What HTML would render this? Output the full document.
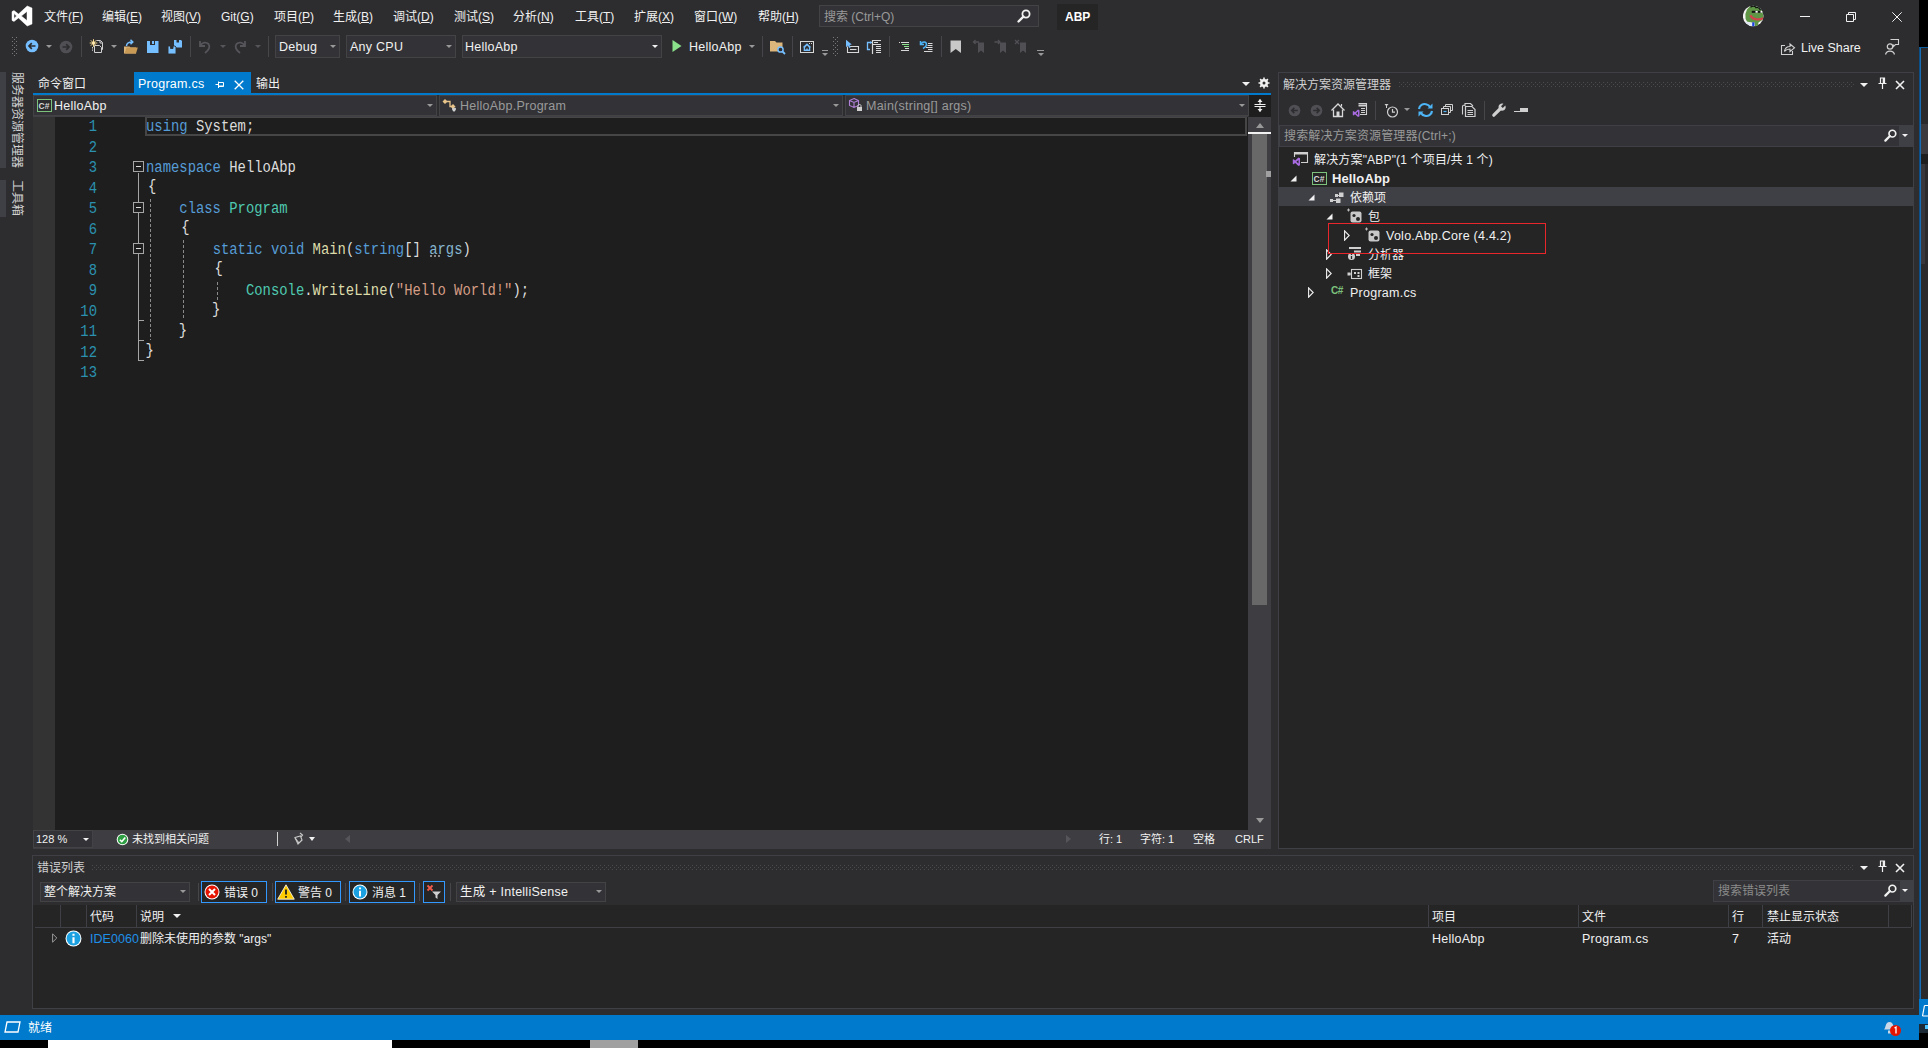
<!DOCTYPE html>
<html lang="zh-CN">
<head>
<meta charset="utf-8">
<title>ABP - Microsoft Visual Studio</title>
<style>
*{box-sizing:border-box;margin:0;padding:0}
html,body{width:1928px;height:1048px;overflow:hidden;background:#000}
body{font-family:"Liberation Sans","Noto Sans CJK SC",sans-serif;font-size:12px;color:#f1f1f1;position:relative}
.a{position:absolute}
.t{position:absolute;white-space:nowrap;line-height:16px;height:16px}
#win{position:absolute;left:0;top:0;width:1919px;height:1040px;background:#2d2d30;overflow:hidden}
u{text-decoration:underline;text-underline-offset:1px}
.mi{position:absolute;top:9px;white-space:nowrap;line-height:16px;font-size:12px;color:#f1f1f1}
.combo{position:absolute;background:#333337;border:1px solid #434346}
.arr{position:absolute;width:0;height:0;border-left:3px solid transparent;border-right:3px solid transparent;border-top:3px solid #999}
.arrw{position:absolute;width:0;height:0;border-left:4px solid transparent;border-right:4px solid transparent;border-top:4px solid #f1f1f1}
.sep{position:absolute;width:1px;background:#46464a}
.code{font-family:"Liberation Mono","Noto Sans CJK SC",monospace;font-size:13.89px;white-space:pre;position:absolute;height:20.5px;line-height:20.5px;color:#dcdcdc;transform-origin:0 50%;transform:scaleY(1.18)}
.ln{font-family:"Liberation Mono",monospace;font-size:13.89px;position:absolute;left:60px;width:37px;text-align:right;height:20.5px;line-height:20.5px;color:#2b91af;transform-origin:0 50%;transform:scaleY(1.18)}
.k{color:#569cd6}.c{color:#4ec9b0}.m{color:#dcdcaa}.s{color:#d69d85}.p{color:#9cdcfe}
.grip{position:absolute;height:5px;background-image:radial-gradient(circle,#46464a 0.6px,transparent 0.8px);background-size:4px 4px;background-position:0 0}
.tree{position:absolute;left:1279px;width:632px;height:19px}
</style>
</head>
<body>
<div id="win">
<svg width="0" height="0" style="position:absolute"><defs>
<pattern id="gp" width="4" height="4" patternUnits="userSpaceOnUse"><rect x="0" y="0" width="1" height="1" fill="#4a4a4f"/><rect x="2" y="2" width="1" height="1" fill="#4a4a4f"/></pattern>
<pattern id="gv" width="4" height="4" patternUnits="userSpaceOnUse"><rect x="0" y="0" width="1" height="1" fill="#77777c"/><rect x="2" y="2" width="1" height="1" fill="#77777c"/></pattern>
</defs></svg>
<!-- MENUBAR -->
<div id="menubar">
<svg class="a" style="left:11px;top:5px" width="22" height="22" viewBox="0 0 22 22"><path fill="#ffffff" stroke="#ffffff" stroke-width="0.5" stroke-linejoin="round" d="M16.2 1 L21 3 V19 L16.2 21 L7.5 12.9 L3 16.4 L1 15.4 V6.6 L3 5.6 L7.5 9.1 Z M16 6.4 L10.3 11 L16 15.6 Z M3 8.6 V13.4 L5.5 11 Z"/></svg>
<div class="mi" style="left:44px">文件(<u>F</u>)</div>
<div class="mi" style="left:102px">编辑(<u>E</u>)</div>
<div class="mi" style="left:161px">视图(<u>V</u>)</div>
<div class="mi" style="left:221px">Git(<u>G</u>)</div>
<div class="mi" style="left:274px">项目(<u>P</u>)</div>
<div class="mi" style="left:333px">生成(<u>B</u>)</div>
<div class="mi" style="left:393px">调试(<u>D</u>)</div>
<div class="mi" style="left:454px">测试(<u>S</u>)</div>
<div class="mi" style="left:513px">分析(<u>N</u>)</div>
<div class="mi" style="left:575px">工具(<u>T</u>)</div>
<div class="mi" style="left:634px">扩展(<u>X</u>)</div>
<div class="mi" style="left:694px">窗口(<u>W</u>)</div>
<div class="mi" style="left:758px">帮助(<u>H</u>)</div>
<div class="a" style="left:819px;top:5px;width:220px;height:22px;background:#333337;border:1px solid #434346"></div>
<div class="t" style="left:824px;top:9px;color:#999">搜索 (Ctrl+Q)</div>
<svg class="a" style="left:1016px;top:8px" width="16" height="16" viewBox="0 0 16 16"><circle cx="10" cy="6" r="3.6" fill="none" stroke="#f1f1f1" stroke-width="1.8"/><path d="M7.4 8.6 L2.5 13.5" stroke="#f1f1f1" stroke-width="2.4" stroke-linecap="round"/></svg>
<div class="a" style="left:1057px;top:4px;width:41px;height:26px;background:#252526"></div>
<div class="t" style="left:1065px;top:9px;font-weight:bold;color:#fff">ABP</div>
<!-- avatar -->
<svg class="a" style="left:1743px;top:5px" width="21" height="22" viewBox="0 0 21 22"><defs><clipPath id="avc"><circle cx="10.200" cy="11" r="10.300"/></clipPath></defs><circle cx="10.200" cy="11" r="10.300" fill="#f2f2f2"/><g clip-path="url(#avc)"><path d="M2.600 14 L2.400 9 L4 4.500 L7 1.300 L12 0.500 L16.500 2.500 L19 5.500 L20 9 L21 13 L18.500 15.500 L15.500 17.500 L14.500 21.500 L12 21.500 L11.500 17.500 L8 17.500 L4 16.500Z" fill="#5e9645"/><path d="M7.500 2.200 C9 0.500 12 0.500 13 2.500 C14.500 2 16.500 3 17.500 5" fill="none" stroke="#111" stroke-width="1.500"/><rect x="8.800" y="5.800" width="11" height="2" fill="#111"/><rect x="12.500" y="5.900" width="2.200" height="1.800" fill="#fff"/><rect x="17.500" y="5.900" width="2" height="1.800" fill="#fff"/><path d="M7.300 10.200 C9 14 15 16 21 13" fill="none" stroke="#d0454c" stroke-width="2.200"/><path d="M2.500 17 L8.500 17.500 L9 22 L5 21Z" fill="#dfe8f2"/><rect x="9.200" y="17.300" width="2.200" height="4.500" fill="#1b3fe0"/></g></svg>
<!-- window buttons -->
<div class="a" style="left:1800px;top:16px;width:10px;height:1px;background:#f1f1f1"></div>
<svg class="a" style="left:1846px;top:12px" width="10" height="10" viewBox="0 0 10 10"><path d="M0.500 2.500 H7.500 V9.500 H0.500 Z M2.500 2.500 V0.500 H9.500 V7.500 H7.500" fill="none" stroke="#f1f1f1" stroke-width="1"/></svg>
<svg class="a" style="left:1892px;top:12px" width="10" height="10" viewBox="0 0 10 10"><path d="M0.300 0.300 L9.700 9.700 M9.700 0.300 L0.300 9.700" stroke="#f1f1f1" stroke-width="1"/></svg>
</div><!--/menubar-->
<!-- TOOLBAR -->
<div id="toolbar">
<svg class="a" style="left:12px;top:37px" width="5" height="19"><rect width="5" height="19" fill="url(#gv)"/></svg>
<!-- back -->
<svg class="a" style="left:25px;top:39px" width="14" height="14" viewBox="0 0 14 14"><circle cx="7" cy="7" r="6.3" fill="#75beff"/><path d="M10.5 7 H4.2 M6.8 4.2 L4 7 L6.8 9.8" stroke="#2d2d30" stroke-width="1.7" fill="none"/></svg>
<div class="arr" style="left:46px;top:45px"></div>
<svg class="a" style="left:59px;top:40px" width="14" height="14" viewBox="0 0 14 14"><circle cx="7" cy="7" r="6.3" fill="#505054"/><path d="M3.5 7 H9.8 M7.2 4.2 L10 7 L7.2 9.8" stroke="#2d2d30" stroke-width="1.7" fill="none"/></svg>
<div class="sep" style="left:81px;top:36px;height:21px"></div>
<!-- new item -->
<svg class="a" style="left:89px;top:38px" width="16" height="16" viewBox="0 0 16 16"><path d="M7.500 2.500 H11.500 L13.500 4.500 V11.500 H12.500" fill="none" stroke="#d0d0d0" stroke-width="1"/><path d="M11 2.500 V5 H13.500" fill="none" stroke="#d0d0d0" stroke-width="1"/><path d="M5.500 7.500 H10.500 L12.500 9.500 V14.500 H5.500 Z" fill="#2d2d30" stroke="#d0d0d0" stroke-width="1"/><path d="M3.500 9 V12.500 H5" fill="none" stroke="#d0d0d0" stroke-width="1" stroke-dasharray="1.500 1"/><path d="M4.500 1.200 V8.800 M0.700 5 H8.300 M1.800 2.300 L7.200 7.700 M7.200 2.300 L1.800 7.700" stroke="#f5d78a" stroke-width="1"/><circle cx="4.500" cy="5" r="1.600" fill="#ffe9b0"/></svg>
<div class="arr" style="left:111px;top:45px"></div>
<!-- open -->
<svg class="a" style="left:123px;top:39px" width="16" height="16" viewBox="0 0 16 16"><path d="M1 7.500 H6.500 L7.500 8.500 H13 V14.500 H1 Z" fill="#dcb67a"/><path d="M3.500 8.500 H14.800 L13 14.500 H1.500Z" fill="#c99a55"/><path d="M3.500 7 C3.500 3.500 6 3 9.500 3 M7.500 0.800 L9.800 3 L7.500 5.200" stroke="#75beff" stroke-width="1.500" fill="none"/></svg>
<!-- save -->
<svg class="a" style="left:146px;top:40px" width="14" height="14" viewBox="0 0 14 14"><path d="M1 1 H4 V5 H9 V1 H12.5 V13 H1 Z" fill="#75beff"/><rect x="6" y="1" width="2" height="3" fill="#75beff"/></svg>
<!-- save all -->
<svg class="a" style="left:167px;top:39px" width="16" height="16" viewBox="0 0 16 16"><path d="M7 1 H9.500 V3.500 H12 V1 H14 L15 2 V8.500 H7Z" fill="#75beff"/><path d="M1 7 H3.500 V9.500 H6 V7 H8 L9 8 V15 H1Z" fill="#75beff" stroke="#2d2d30" stroke-width="0.900"/></svg>
<div class="sep" style="left:190px;top:36px;height:21px"></div>
<!-- undo -->
<svg class="a" style="left:197px;top:39px" width="16" height="16" viewBox="0 0 16 16"><path d="M3 2 V7 H8 M3.5 6.5 C5 3.5 9 2.5 11.5 5 C13.5 7.5 12 11 8 14" fill="none" stroke="#55555a" stroke-width="1.8"/></svg>
<div class="arr" style="left:220px;top:45px;border-top-color:#55555a"></div>
<svg class="a" style="left:232px;top:39px" width="16" height="16" viewBox="0 0 16 16"><path d="M13 2 V7 H8 M12.5 6.5 C11 3.500 7 2.5 4.500 5 C2.500 7.500 4 11 8 14" fill="none" stroke="#55555a" stroke-width="1.8"/></svg>
<div class="arr" style="left:255px;top:45px;border-top-color:#55555a"></div>
<div class="sep" style="left:268px;top:36px;height:21px"></div>
<!-- combos -->
<div class="combo" style="left:275px;top:35px;width:65px;height:23px"></div>
<div class="t" style="left:279px;top:39px;font-size:12.5px;letter-spacing:.25px">Debug</div>
<div class="arr" style="left:330px;top:45px"></div>
<div class="combo" style="left:346px;top:35px;width:110px;height:23px"></div>
<div class="t" style="left:350px;top:39px;font-size:12.5px;letter-spacing:.25px">Any CPU</div>
<div class="arr" style="left:446px;top:45px"></div>
<div class="combo" style="left:462px;top:35px;width:200px;height:23px"></div>
<div class="t" style="left:465px;top:39px;font-size:12.5px;letter-spacing:.25px">HelloAbp</div>
<div class="arr" style="left:652px;top:45px;border-top-color:#f1f1f1"></div>
<!-- play -->
<svg class="a" style="left:672px;top:40px" width="10" height="12" viewBox="0 0 10 12"><path d="M0.5 0 L9.500 6 L0.5 12Z" fill="#8ae28a"/></svg>
<div class="t" style="left:689px;top:39px;font-size:12.5px;letter-spacing:.25px">HelloAbp</div>
<div class="arr" style="left:749px;top:45px"></div>
<div class="sep" style="left:762px;top:36px;height:21px"></div>
<svg class="a" style="left:769px;top:39px" width="17" height="16" viewBox="0 0 17 16"><path d="M1 2 H6 L7.5 3.500 H13.5 V12.5 H1Z" fill="#dcb67a"/><circle cx="11.5" cy="10.5" r="2.6" fill="#2d2d30" stroke="#75beff" stroke-width="1.5"/><path d="M13.5 12.5 L16 15" stroke="#75beff" stroke-width="1.8"/></svg>
<div class="sep" style="left:792px;top:36px;height:21px"></div>
<svg class="a" style="left:800px;top:41px" width="14" height="12" viewBox="0 0 14 12"><rect x="0.500" y="0.500" width="13" height="11" fill="none" stroke="#d8d8d8" stroke-width="1"/><path d="M7 2.300 L11.300 6.300 H10.300 V10 H3.700 V6.300 H2.700Z" fill="#75beff"/><path d="M7 4.500 L9 6.500 V8.500 H5 V6.500Z" fill="#2d2d30"/><rect x="6.300" y="7.500" width="1.400" height="2.500" fill="#75beff"/><rect x="9" y="2" width="1" height="1" fill="#d8d8d8"/><rect x="11" y="2" width="1" height="1" fill="#d8d8d8"/></svg>
<div class="a" style="left:822px;top:50px;width:6px;height:1px;background:#999"></div><div class="arr" style="left:822px;top:53px"></div>
<svg class="a" style="left:833px;top:37px" width="5" height="19"><rect width="5" height="19" fill="url(#gv)"/></svg>
<svg class="a" style="left:845px;top:39px" width="16" height="16" viewBox="0 0 16 16"><path d="M2.500 7.500 V13.500 H13.500 V7.500 H5" fill="none" stroke="#d8d8d8" stroke-width="1.100"/><path d="M5 10.500 H11.500" stroke="#d8d8d8" stroke-width="1.100"/><path d="M1 0.800 V8.200 L2.900 6.600 L4.300 9 L5.800 8.200 L4.500 5.900 L6.800 5.600Z" fill="#75beff"/></svg>
<svg class="a" style="left:866px;top:39px" width="16" height="16" viewBox="0 0 16 16"><path d="M6.500 1 V15" stroke="#d8d8d8" stroke-width="1.200"/><path d="M6 1.500 H15 M8 3.500 H12 M7 5.500 H15 M10 7.500 H15 M10 9.500 H15 M10 11.500 H15 M10 13.500 H15" stroke="#d8d8d8" stroke-width="1"/><path d="M4 3.500 H1.500 V10.500 H4" fill="none" stroke="#75beff" stroke-width="1.300"/><path d="M3.500 3.500 H6 M4.700 2.200 V4.800" stroke="#75beff" stroke-width="1.100"/></svg>
<div class="sep" style="left:889px;top:36px;height:21px"></div>
<svg class="a" style="left:898px;top:40px" width="14" height="14" viewBox="0 0 14 14"><path d="M1 2.500 H2 M3 2.500 H11 M7 8.500 H11 M3 10.500 H11" stroke="#d8d8d8" stroke-width="1"/><path d="M4 4.500 H11 M6 6.500 H11" stroke="#8ae28a" stroke-width="1"/></svg>
<svg class="a" style="left:919px;top:39px" width="16" height="16" viewBox="0 0 16 16"><path d="M1.500 2 V5.500 H5" fill="none" stroke="#4db4f5" stroke-width="1.500"/><path d="M2 5 C3.500 2 7.500 2.500 7.500 5.500 C7.500 7.500 5.500 8.500 4 9.500" fill="none" stroke="#4db4f5" stroke-width="1.600"/><path d="M9 4.500 H13.500 M8.500 6.500 H13.500 M7 8.500 H13.500 M9 10.500 H13.500 M5 12.500 H13.500" stroke="#d8d8d8" stroke-width="1"/></svg>
<div class="sep" style="left:941px;top:36px;height:21px"></div>
<svg class="a" style="left:950px;top:40px" width="12" height="14" viewBox="0 0 12 14"><path d="M0.500 0.500 H11 V13 L5.750 9 L0.500 13Z" fill="#c8c8c8"/></svg>
<svg class="a" style="left:972px;top:39px" width="14" height="15" viewBox="0 0 14 15"><path d="M6 3.500 H12 V14 L9 11.500 L6 14Z" fill="#505054"/><path d="M7 3 H1.500 M3.500 1 L1.500 3 L3.500 5" stroke="#505054" stroke-width="1.300" fill="none"/></svg>
<svg class="a" style="left:994px;top:39px" width="14" height="15" viewBox="0 0 14 15"><path d="M6 3.500 H12 V14 L9 11.500 L6 14Z" fill="#505054"/><path d="M0.500 3 H6 M4 1 L6 3 L4 5" stroke="#505054" stroke-width="1.300" fill="none"/></svg>
<svg class="a" style="left:1014px;top:39px" width="14" height="15" viewBox="0 0 14 15"><path d="M6 3.500 H12 V14 L9 11.500 L6 14Z" fill="#505054"/><path d="M1 1 L5 5 M5 1 L1 5" stroke="#505054" stroke-width="1.300" fill="none"/></svg>
<div class="a" style="left:1037px;top:50px;width:7px;height:1px;background:#999"></div><div class="arr" style="left:1038px;top:53px"></div>
<!-- live share -->
<svg class="a" style="left:1780px;top:40px" width="16" height="16" viewBox="0 0 16 16"><path d="M5 5.500 H1.500 V14.500 H12.500 V11" fill="none" stroke="#d0d0d0" stroke-width="1.100"/><path d="M4.500 11.500 C5 8 7.500 6.500 10 6.500 V4 L14.500 7.800 L10 11.500 V9 C8 9 6 9.500 4.500 11.500Z" fill="none" stroke="#d0d0d0" stroke-width="1.100"/></svg>
<div class="t" style="left:1801px;top:40px;font-size:12.5px;letter-spacing:0">Live Share</div>
<svg class="a" style="left:1883px;top:38px" width="18" height="18" viewBox="0 0 18 18"><path d="M7.500 1.500 H15.500 V6.500 H12.500 L10.500 8.500 V6.500" fill="none" stroke="#d0d0d0" stroke-width="1.100"/><circle cx="7" cy="8.500" r="2.700" fill="#2d2d30" stroke="#d0d0d0" stroke-width="1.200"/><path d="M2.500 16.500 C3.500 12 10.500 12 11.500 16.500" fill="none" stroke="#d0d0d0" stroke-width="1.200"/></svg>
</div><!--/toolbar-->
<!-- LEFTSTRIP -->
<div id="leftstrip"></div>
<!-- EDITOR -->
<div id="editor">
<div class="a" style="left:0;top:72px;width:6px;height:96px;background:#3f3f46"></div>
<div class="a" style="left:0;top:180px;width:6px;height:37px;background:#3f3f46"></div>
<div class="t" style="left:24.5px;top:72px;transform-origin:0 0;transform:rotate(90deg);color:#d0d0d0">服务器资源管理器</div>
<div class="t" style="left:24.5px;top:179.5px;transform-origin:0 0;transform:rotate(90deg);color:#d0d0d0">工具箱</div>
<div class="t" style="left:38px;top:76px">命令窗口</div>
<div class="a" style="left:134px;top:72px;width:117px;height:22px;background:#007acc"></div>
<div class="t" style="left:138px;top:76px;font-size:12.5px;letter-spacing:.25px;color:#fff">Program.cs</div>
<svg class="a" style="left:215px;top:80px" width="10" height="10" viewBox="0 0 10 10"><path d="M0.500 4.500 H4 M3.500 1.500 V8 M3.500 2.500 H8.500 V6.500 H3.500 M3.500 6 H8.500" fill="none" stroke="#fff" stroke-width="1"/></svg>
<svg class="a" style="left:234px;top:80px" width="10" height="10" viewBox="0 0 10 10"><path d="M0.700 0.700 L9.300 9.300 M9.300 0.700 L0.700 9.300" stroke="#fff" stroke-width="1.300"/></svg>
<div class="t" style="left:256px;top:76px">输出</div>
<div class="arrw" style="left:1242px;top:82px"></div>
<svg class="a" style="left:1258px;top:77px" width="12" height="12" viewBox="0 0 12 12"><circle cx="6" cy="6" r="3" fill="none" stroke="#f1f1f1" stroke-width="2"/><path d="M6 0.500 V11.500 M0.500 6 H11.500 M2.100 2.100 L9.900 9.900 M9.900 2.100 L2.100 9.900" stroke="#f1f1f1" stroke-width="1.600"/><circle cx="6" cy="6" r="1.500" fill="#2d2d30"/></svg>
<div class="a" style="left:33px;top:93px;width:1238px;height:2px;background:#007acc"></div>
<div class="a" style="left:33px;top:95px;width:1215px;height:22px;background:#2d2d30;border-bottom:1px solid #3f3f46"></div>
<div class="combo" style="left:33px;top:95px;width:404px;height:21px"></div>
<div class="combo" style="left:439px;top:95px;width:404px;height:21px"></div>
<div class="combo" style="left:845px;top:95px;width:404px;height:21px"></div>
<svg class="a" style="left:37px;top:99px" width="15" height="13" viewBox="0 0 15 13"><rect x="0.500" y="0.500" width="14" height="12" fill="#2d2d30" stroke="#7cc17c" stroke-width="1"/><text x="1.500" y="10" font-family="Liberation Sans,sans-serif" font-size="8.500" font-weight="bold" fill="#d8d8d8">C#</text></svg>
<div class="t" style="left:54px;top:98px;font-size:12.5px;letter-spacing:.25px">HelloAbp</div>
<div class="arr" style="left:427px;top:104px"></div>
<svg class="a" style="left:442px;top:98px" width="16" height="15" viewBox="0 0 16 15"><path d="M3 3.500 H8 V8.500 H11" fill="none" stroke="#e8c48a" stroke-width="1.300"/><path d="M3 1 L5.500 3.500 L3 6 L0.500 3.500Z M11 6 L13.500 8.500 L11 11 L8.500 8.500Z" fill="#e8c48a"/><path d="M10 11 C10 9.500 12 9.500 12 10.800 C12 9.500 14 9.500 14 11 C14 12.500 12 13.500 12 14 C12 13.500 10 12.500 10 11Z" fill="#d0d0d0"/></svg>
<div class="t" style="left:460px;top:98px;font-size:12.5px;letter-spacing:.25px;color:#9a9a9a">HelloAbp.Program</div>
<div class="arr" style="left:833px;top:104px"></div>
<svg class="a" style="left:848px;top:97px" width="16" height="16" viewBox="0 0 16 16"><path d="M6 1.500 L10.500 3.500 V8.500 L6 10.500 L1.500 8.500 V3.500Z M1.500 3.500 L6 5.500 L10.500 3.500 M6 5.500 V10.500" fill="none" stroke="#b180d7" stroke-width="1.100"/><rect x="9" y="10" width="5" height="4" fill="#d0d0d0"/><path d="M10 10 V8.500 C10 7.200 13 7.200 13 8.500 V10" fill="none" stroke="#d0d0d0" stroke-width="1"/></svg>
<div class="t" style="left:866px;top:98px;font-size:12.5px;letter-spacing:.25px;color:#9a9a9a">Main(string[] args)</div>
<div class="arr" style="left:1239px;top:104px"></div>
<div class="a" style="left:1249px;top:95px;width:22px;height:22px;background:#1e1e1e"></div>
<svg class="a" style="left:1254px;top:98px" width="12" height="15" viewBox="0 0 12 15"><path d="M0.500 6.500 H11.500 M0.500 8.500 H11.500" stroke="#f1f1f1" stroke-width="1"/><path d="M6 1.500 V6 M6 9 V13.500" stroke="#f1f1f1" stroke-width="1.200"/><path d="M3.500 4 L6 1 L8.500 4Z M3.500 11 L6 14 L8.500 11Z" fill="#f1f1f1"/></svg>
<div class="a" style="left:33px;top:117px;width:1215px;height:713px;background:#1e1e1e"></div>
<div class="a" style="left:33px;top:117px;width:22px;height:713px;background:#333333"></div>
<div class="a" style="left:145px;top:117px;width:1102px;height:19px;border:2px solid #464646;border-top-width:1px"></div>
<div class="ln" style="top:116.0px">1</div>
<div class="code" style="left:146px;top:116.0px"><span class="k">using</span> System;</div>
<div class="ln" style="top:136.5px">2</div>
<div class="ln" style="top:157.0px">3</div>
<div class="code" style="left:146px;top:157.0px"><span class="k">namespace</span> HelloAbp</div>
<div class="ln" style="top:177.5px">4</div>
<div class="code" style="left:148px;top:176.0px">{</div>
<div class="ln" style="top:198.0px">5</div>
<div class="code" style="left:146px;top:198.0px">    <span class="k">class</span> <span class="c">Program</span></div>
<div class="ln" style="top:218.5px">6</div>
<div class="code" style="left:148px;top:217.0px">    {</div>
<div class="ln" style="top:239.0px">7</div>
<div class="code" style="left:146px;top:239.0px">        <span class="k">static</span> <span class="k">void</span> <span class="m">Main</span>(<span class="k">string</span>[] <span class="p" style="color:#86b6d0">args</span>)</div>
<div class="ln" style="top:259.5px">8</div>
<div class="code" style="left:148px;top:258.0px">        {</div>
<div class="ln" style="top:280.0px">9</div>
<div class="code" style="left:146px;top:280.0px">            <span class="c">Console</span>.<span class="m">WriteLine</span>(<span class="s">"Hello World!"</span>);</div>
<div class="ln" style="top:300.5px">10</div>
<div class="code" style="left:145.5px;top:299.0px">        }</div>
<div class="ln" style="top:321.0px">11</div>
<div class="code" style="left:145.5px;top:319.5px">    }</div>
<div class="ln" style="top:341.5px">12</div>
<div class="code" style="left:145.5px;top:340.0px">}</div>
<div class="ln" style="top:362.0px">13</div>
<div class="a" style="left:138px;top:173px;width:1px;height:187px;background:#a5a5a5"></div>
<div class="a" style="left:133px;top:161px;width:11px;height:11px;border:1px solid #a5a5a5;background:#1e1e1e"></div><div class="a" style="left:136px;top:166px;width:5px;height:1px;background:#dcdcdc"></div>
<div class="a" style="left:133px;top:202px;width:11px;height:11px;border:1px solid #a5a5a5;background:#1e1e1e"></div><div class="a" style="left:136px;top:207px;width:5px;height:1px;background:#dcdcdc"></div>
<div class="a" style="left:133px;top:243px;width:11px;height:11px;border:1px solid #a5a5a5;background:#1e1e1e"></div><div class="a" style="left:136px;top:248px;width:5px;height:1px;background:#dcdcdc"></div>
<div class="a" style="left:138px;top:320px;width:6px;height:1px;background:#a5a5a5"></div>
<div class="a" style="left:138px;top:340px;width:6px;height:1px;background:#a5a5a5"></div>
<div class="a" style="left:138px;top:360px;width:6px;height:1px;background:#a5a5a5"></div>
<div class="a" style="left:150px;top:199px;width:1px;height:141px;background-image:linear-gradient(#8a8a8a 60%,transparent 60%);background-size:1px 5px"></div>
<div class="a" style="left:183px;top:240px;width:1px;height:80px;background-image:linear-gradient(#8a8a8a 60%,transparent 60%);background-size:1px 5px"></div>
<div class="a" style="left:217px;top:282px;width:1px;height:18px;background-image:linear-gradient(#8a8a8a 60%,transparent 60%);background-size:1px 5px"></div>
<div class="a" style="left:430px;top:255px;width:10px;height:2px;background-image:linear-gradient(90deg,#8a8a8a 50%,transparent 50%);background-size:4px 2px"></div>
<div class="a" style="left:1248px;top:117px;width:23px;height:713px;background:#3e3e42"></div>
<div class="a" style="left:1256px;top:123px;width:0;height:0;border-left:4px solid transparent;border-right:4px solid transparent;border-bottom:5px solid #999"></div>
<div class="a" style="left:1256px;top:818px;width:0;height:0;border-left:4px solid transparent;border-right:4px solid transparent;border-top:5px solid #999"></div>
<div class="a" style="left:1252px;top:134px;width:15px;height:471px;background:#686868"></div>
<div class="a" style="left:1248px;top:132px;width:23px;height:2px;background:#f1f1f1"></div>
<div class="a" style="left:1266px;top:171px;width:5px;height:6px;background:#a0a0a0"></div>
<div class="a" style="left:33px;top:830px;width:1238px;height:19px;background:#3e3e42"></div>
<div class="a" style="left:33px;top:830px;width:60px;height:18px;background:#333337;border:1px solid #434346"></div>
<div class="t" style="left:36px;top:831px;font-size:11px">128 %</div>
<div class="arrw" style="left:83px;top:838px;border-width:3px;border-top-width:3.5px"></div>
<svg class="a" style="left:116px;top:833px" width="13" height="13" viewBox="0 0 13 13"><circle cx="6.500" cy="6.500" r="5.800" fill="#fff"/><circle cx="6.500" cy="6.500" r="4.800" fill="#2ea043"/><path d="M3.800 6.700 L5.800 8.600 L9.300 4.600" fill="none" stroke="#fff" stroke-width="1.500"/></svg>
<div class="t" style="left:132px;top:831px;font-size:11px">未找到相关问题</div>
<div class="a" style="left:277px;top:832px;width:1px;height:14px;background:#d0d0d0"></div>
<svg class="a" style="left:292px;top:832px" width="13" height="14" viewBox="0 0 13 14"><path d="M8 1 L10.500 3 L9 5 M3 5.500 L8.500 4 L10 8 L6 12 Z" fill="none" stroke="#c8c8c8" stroke-width="1.200"/><path d="M3 6 L7 11" stroke="#c8c8c8" stroke-width="1.200"/></svg>
<div class="arrw" style="left:309px;top:837px;border-width:3.5px;border-top-width:4px"></div>
<div class="a" style="left:345px;top:835px;width:0;height:0;border-top:4px solid transparent;border-bottom:4px solid transparent;border-right:5px solid #55555a"></div>
<div class="a" style="left:1066px;top:835px;width:0;height:0;border-top:4px solid transparent;border-bottom:4px solid transparent;border-left:5px solid #55555a"></div>
<div class="t" style="left:1099px;top:831px;font-size:11px">行: 1</div>
<div class="t" style="left:1140px;top:831px;font-size:11px">字符: 1</div>
<div class="t" style="left:1193px;top:831px;font-size:11px">空格</div>
<div class="t" style="left:1235px;top:831px;font-size:11px">CRLF</div>
</div><!--/editor-->
<!-- SOLEXP -->
<div id="solexp">
<div class="a" style="left:1278px;top:72px;width:636px;height:777px;background:#252526;border:1px solid #3f3f46"></div>
<div class="a" style="left:1279px;top:73px;width:634px;height:52px;background:#2d2d30"></div>
<div class="t" style="left:1283px;top:77px;color:#d0d0d0">解决方案资源管理器</div>
<svg class="a" style="left:1399px;top:82px" width="455" height="5"><rect width="455" height="5" fill="url(#gp)"/></svg>
<div class="arrw" style="left:1860px;top:83px"></div>
<svg class="a" style="left:1877px;top:77px" width="11" height="13" viewBox="0 0 11 13"><path d="M3.500 1 H7.500 V6.500 H3.500Z M1.500 6.500 H9.500 M5.500 6.500 V12" fill="none" stroke="#f1f1f1" stroke-width="1.200"/><path d="M6.500 1 V6.500" stroke="#f1f1f1" stroke-width="1.600"/></svg>
<svg class="a" style="left:1895px;top:80px" width="10" height="10" viewBox="0 0 10 10"><path d="M1 1 L9 9 M9 1 L1 9" stroke="#f1f1f1" stroke-width="1.600"/></svg>
<svg class="a" style="left:1288px;top:103.5px" width="13" height="13" viewBox="0 0 14 14"><circle cx="7" cy="7" r="6.300" fill="#505054"/><path d="M10.500 7 H4.200 M6.800 4.200 L4 7 L6.800 9.800" stroke="#2d2d30" stroke-width="1.700" fill="none"/></svg>
<svg class="a" style="left:1310px;top:103.5px" width="13" height="13" viewBox="0 0 14 14"><circle cx="7" cy="7" r="6.300" fill="#505054"/><path d="M3.500 7 H9.800 M7.200 4.200 L10 7 L7.200 9.800" stroke="#2d2d30" stroke-width="1.700" fill="none"/></svg>
<svg class="a" style="left:1330px;top:102px" width="16" height="16" viewBox="0 0 16 16"><path d="M1.500 8.500 L8 2 L14.500 8.500" fill="none" stroke="#d8d8d8" stroke-width="1.300"/><path d="M3.500 7.500 V14.500 H12.500 V7.500" fill="none" stroke="#d8d8d8" stroke-width="1.300"/><rect x="6.500" y="9.500" width="3" height="5" fill="#d8d8d8"/><path d="M11.500 4.500 V2" stroke="#d8d8d8" stroke-width="1.200"/></svg>
<svg class="a" style="left:1352px;top:102px" width="16" height="16" viewBox="0 0 16 16"><path d="M6.500 1.500 H14.500 V12.500 H8" fill="none" stroke="#d0d0d0" stroke-width="1.100"/><path d="M6.500 3.500 H14.500" stroke="#d0d0d0" stroke-width="2"/><path d="M9 6.500 H13 M9 8.500 H13 M9 10.500 H13" stroke="#d0d0d0" stroke-width="1"/><path d="M6 7.500 L7.500 8.200 V14.300 L6 15 L3 12.300 L1.500 13.500 L0.800 13 V9.500 L1.500 9 L3 10.200Z M6 9.500 L4 11.250 L6 13Z" fill="#a86be0"/></svg>
<div class="sep" style="left:1375px;top:101px;height:19px"></div>
<svg class="a" style="left:1383px;top:102px" width="17" height="17" viewBox="0 0 17 17"><circle cx="9.500" cy="10" r="5" fill="none" stroke="#d0d0d0" stroke-width="1.200"/><path d="M9.500 7 V10.200 H12" fill="none" stroke="#d0d0d0" stroke-width="1.200"/><path d="M1.500 2 H5.500 L3.500 4.500Z" fill="#d0d0d0"/><path d="M3.500 4 V6" stroke="#d0d0d0" stroke-width="1"/></svg>
<div class="arr" style="left:1404px;top:108px"></div>
<svg class="a" style="left:1417px;top:102px" width="17" height="16" viewBox="0 0 17 16"><path d="M2 7 C2.500 3 6 1.500 9 2.200 C11 2.700 12.500 4 13 5 M15 9 C14.500 13 11 14.500 8 13.800 C6 13.300 4.500 12 4 11" fill="none" stroke="#4db4f5" stroke-width="2.200"/><path d="M15.500 1.500 V6.500 H10.500Z M1.500 14.500 V9.500 H6.500Z" fill="#4db4f5"/></svg>
<svg class="a" style="left:1440px;top:103px" width="14" height="14" viewBox="0 0 14 14"><path d="M5.500 3 V1.500 H12.500 V7.500 H11 M3.500 5 V3.500 H10.500 V9.500 H9" fill="none" stroke="#d0d0d0" stroke-width="1"/><rect x="1.500" y="5.500" width="7" height="6" fill="none" stroke="#d0d0d0" stroke-width="1"/><path d="M3.500 8.500 H6.500" stroke="#4db4f5" stroke-width="1.200"/></svg>
<svg class="a" style="left:1461px;top:102px" width="16" height="16" viewBox="0 0 16 16"><path d="M4 4 V1.500 H9.500 L12 4 M1.500 12.500 V4.500 C1.500 3 2.500 3 4 3" fill="none" stroke="#d0d0d0" stroke-width="1.100"/><path d="M4.500 4.500 H11 L14 7.500 V14.500 H4.500Z" fill="none" stroke="#d0d0d0" stroke-width="1.200"/><path d="M6.500 8.500 H12 M6.500 10.500 H12 M6.500 12.500 H12" stroke="#d0d0d0" stroke-width="1"/></svg>
<div class="sep" style="left:1484px;top:101px;height:19px"></div>
<svg class="a" style="left:1491px;top:102px" width="16" height="16" viewBox="0 0 16 16"><path d="M2.800 13.200 L9 7" stroke="#d0d0d0" stroke-width="3.200" stroke-linecap="round"/><path d="M14.300 3.600 L11.800 6 L10 4.200 L12.400 1.700 C10.300 0.800 7.500 2.200 7.500 5 C7.500 8 10.500 9.500 13 8.200 C14.800 7.200 15 5 14.300 3.600Z" fill="#d0d0d0"/></svg>
<div class="a" style="left:1514px;top:111px;width:14px;height:1px;background:#d0d0d0"></div><div class="a" style="left:1520px;top:108px;width:8px;height:4px;background:#d0d0d0"></div>
<div class="a" style="left:1279px;top:125px;width:634px;height:22px;background:#333337;border:1px solid #3f3f46"></div>
<div class="t" style="left:1284px;top:128px;color:#999;letter-spacing:.15px">搜索解决方案资源管理器(Ctrl+;)</div>
<div class="a" style="left:1899px;top:126px;width:13px;height:20px;background:#3f3f46"></div>
<svg class="a" style="left:1883px;top:128px" width="15" height="15" viewBox="0 0 16 16"><circle cx="10" cy="6" r="3.600" fill="none" stroke="#f1f1f1" stroke-width="1.800"/><path d="M7.400 8.600 L2.500 13.500" stroke="#f1f1f1" stroke-width="2.400" stroke-linecap="round"/></svg>
<div class="arrw" style="left:1902px;top:134px;border-width:3px;border-top-width:3.500px"></div>
<div class="a" style="left:1279px;top:187px;width:634px;height:19px;background:#3f3f46"></div>
<svg class="a" style="left:1292px;top:151px" width="17" height="16" viewBox="0 0 17 16"><path d="M2.500 6 V1.500 H15.500 V11.500 H9" fill="none" stroke="#d0d0d0" stroke-width="1.100"/><path d="M2.500 2.500 H15.500" stroke="#d0d0d0" stroke-width="2"/><path d="M6.500 6.500 L8 7.200 V14.300 L6.500 15 L3.200 12 L1.500 13.300 L0.800 12.900 V8.600 L1.500 8.200 L3.200 9.500Z M6.500 9 L4.400 10.750 L6.500 12.500Z" fill="#a86be0"/></svg>
<div class="t" style="left:1314px;top:152px;font-size:12px;letter-spacing:.17px">解决方案"ABP"(1 个项目/共 1 个)</div>
<svg class="a" style="left:1290px;top:175px" width="7" height="7" viewBox="0 0 7 7"><path d="M6.500 0.500 V6.500 H0.500Z" fill="#f1f1f1"/></svg>
<svg class="a" style="left:1312px;top:172px" width="15" height="13" viewBox="0 0 15 13"><rect x="0.500" y="0.500" width="14" height="12" fill="#252526" stroke="#7cc17c" stroke-width="1"/><text x="1.500" y="10" font-family="Liberation Sans,sans-serif" font-size="8.500" font-weight="bold" fill="#d8d8d8">C#</text></svg>
<div class="t" style="left:1332px;top:171px;font-weight:bold;font-size:13px;letter-spacing:.12px">HelloAbp</div>
<svg class="a" style="left:1308px;top:194px" width="7" height="7" viewBox="0 0 7 7"><path d="M6.500 0.500 V6.500 H0.500Z" fill="#f1f1f1"/></svg>
<svg class="a" style="left:1329px;top:192px" width="16" height="12" viewBox="0 0 16 12"><rect x="10" y="0.500" width="4.500" height="4.500" fill="#d0d0d0"/><rect x="6" y="2" width="3" height="3" fill="#d0d0d0"/><rect x="7" y="6.500" width="4.500" height="4.500" fill="#d0d0d0"/><rect x="1" y="7" width="3" height="3" fill="#d0d0d0"/><path d="M4 8.500 H7 M9 3.500 H10" stroke="#d0d0d0" stroke-width="1"/></svg>
<div class="t" style="left:1350px;top:190px;font-size:12px">依赖项</div>
<svg class="a" style="left:1326px;top:213px" width="7" height="7" viewBox="0 0 7 7"><path d="M6.500 0.500 V6.500 H0.500Z" fill="#f1f1f1"/></svg>
<svg class="a" style="left:1347px;top:208px" width="16" height="16" viewBox="0 0 16 16"><rect x="3.500" y="3.500" width="11" height="11" rx="2" fill="#c8c8c8"/><circle cx="7" cy="7.500" r="1.600" fill="#252526"/><circle cx="11" cy="11" r="2" fill="#252526"/><path d="M1.500 0.500 V3.500 M0 2 H3" stroke="#c8c8c8" stroke-width="0.900"/></svg>
<div class="t" style="left:1368px;top:209px;font-size:12px">包</div>
<svg class="a" style="left:1344px;top:230px" width="6" height="11" viewBox="0 0 6 11"><path d="M0.600 0.800 L5.200 5.500 L0.600 10.200Z" fill="none" stroke="#f1f1f1" stroke-width="1.100"/></svg>
<svg class="a" style="left:1365px;top:227px" width="16" height="16" viewBox="0 0 16 16"><rect x="3.500" y="3.500" width="11" height="11" rx="2" fill="#c8c8c8"/><circle cx="7" cy="7.500" r="1.600" fill="#252526"/><circle cx="11" cy="11" r="2" fill="#252526"/><path d="M1.500 0.500 V3.500 M0 2 H3" stroke="#c8c8c8" stroke-width="0.900"/></svg>
<div class="t" style="left:1386px;top:228px;font-size:12.5px;letter-spacing:.25px;">Volo.Abp.Core (4.4.2)</div>
<svg class="a" style="left:1326px;top:249px" width="6" height="11" viewBox="0 0 6 11"><path d="M0.600 0.800 L5.200 5.500 L0.600 10.200Z" fill="none" stroke="#f1f1f1" stroke-width="1.100"/></svg>
<svg class="a" style="left:1347px;top:246px" width="16" height="16" viewBox="0 0 16 16"><path d="M2 2 H14 M7 5.500 H14 M9 9 H13" stroke="#d0d0d0" stroke-width="1.800"/><circle cx="4.500" cy="10.500" r="3.500" fill="#d0d0d0"/><path d="M4.500 8 V9 M4.500 10 V13" stroke="#252526" stroke-width="1.300"/></svg>
<div class="t" style="left:1368px;top:247px;font-size:12px">分析器</div>
<svg class="a" style="left:1326px;top:268px" width="6" height="11" viewBox="0 0 6 11"><path d="M0.600 0.800 L5.200 5.500 L0.600 10.200Z" fill="none" stroke="#f1f1f1" stroke-width="1.100"/></svg>
<svg class="a" style="left:1347px;top:268px" width="16" height="12" viewBox="0 0 16 12"><rect x="4.500" y="1.500" width="10" height="9" fill="none" stroke="#d0d0d0" stroke-width="1.100"/><rect x="7" y="4" width="2" height="2" fill="#d0d0d0"/><rect x="10.500" y="4" width="2" height="2" fill="#d0d0d0"/><rect x="10.500" y="7" width="2" height="2" fill="#d0d0d0"/><rect x="0.500" y="4.500" width="3" height="3" fill="#d0d0d0"/><path d="M3 6 H5" stroke="#d0d0d0" stroke-width="1"/></svg>
<div class="t" style="left:1368px;top:266px;font-size:12px">框架</div>
<svg class="a" style="left:1308px;top:287px" width="6" height="11" viewBox="0 0 6 11"><path d="M0.600 0.800 L5.200 5.500 L0.600 10.200Z" fill="none" stroke="#f1f1f1" stroke-width="1.100"/></svg>
<div class="t" style="left:1331px;top:283px;font-size:10px;font-weight:bold;color:#7cc17c;letter-spacing:-0.5px">C#</div>
<div class="t" style="left:1350px;top:285px;font-size:12.5px;letter-spacing:.25px;">Program.cs</div>
<div class="a" style="left:1328px;top:223px;width:218px;height:31px;border:1px solid #e8262c"></div>
</div><!--/solexp-->
<!-- ERRLIST -->
<div id="errlist">
<div class="a" style="left:32px;top:855px;width:1882px;height:154px;background:#252526;border:1px solid #3f3f46"></div>
<div class="a" style="left:33px;top:856px;width:1880px;height:49px;background:#2d2d30"></div>
<div class="t" style="left:37px;top:860px;color:#d0d0d0">错误列表</div>
<svg class="a" style="left:92px;top:865px" width="1762" height="5"><rect width="1762" height="5" fill="url(#gp)"/></svg>
<div class="arrw" style="left:1860px;top:866px"></div>
<svg class="a" style="left:1877px;top:860px" width="11" height="13" viewBox="0 0 11 13"><path d="M3.500 1 H7.500 V6.500 H3.500Z M1.500 6.500 H9.500 M5.500 6.500 V12" fill="none" stroke="#f1f1f1" stroke-width="1.200"/><path d="M6.500 1 V6.500" stroke="#f1f1f1" stroke-width="1.600"/></svg>
<svg class="a" style="left:1895px;top:863px" width="10" height="10" viewBox="0 0 10 10"><path d="M1 1 L9 9 M9 1 L1 9" stroke="#f1f1f1" stroke-width="1.600"/></svg>
<div class="combo" style="left:40px;top:882px;width:150px;height:20px"></div>
<div class="t" style="left:44px;top:884px">整个解决方案</div>
<div class="arr" style="left:180px;top:890px"></div>
<div class="sep" style="left:198px;top:883px;height:18px"></div>
<div class="sep" style="left:272px;top:883px;height:18px"></div>
<div class="sep" style="left:345px;top:883px;height:18px"></div>
<div class="sep" style="left:419px;top:883px;height:18px"></div>
<div class="sep" style="left:450px;top:883px;height:18px"></div>
<div class="a" style="left:201px;top:881px;width:66px;height:22px;background:#252526;border:1px solid #3399ff"></div>
<div class="a" style="left:275px;top:881px;width:66px;height:22px;background:#252526;border:1px solid #3399ff"></div>
<div class="a" style="left:349px;top:881px;width:66px;height:22px;background:#252526;border:1px solid #3399ff"></div>
<div class="a" style="left:423px;top:881px;width:22px;height:22px;background:#252526;border:1px solid #3399ff"></div>
<svg class="a" style="left:204px;top:884px" width="16" height="16" viewBox="0 0 16 16"><circle cx="8" cy="8" r="7.500" fill="#fff"/><circle cx="8" cy="8" r="6.500" fill="#e51400"/><path d="M5 5 L11 11 M11 5 L5 11" stroke="#fff" stroke-width="2"/></svg>
<div class="t" style="left:224px;top:885px">错误 0</div>
<svg class="a" style="left:277px;top:884px" width="18" height="16" viewBox="0 0 18 16"><path d="M9 0.800 L17.300 15.200 H0.700Z" fill="#ffcc00" stroke="#fff" stroke-width="0.800"/><path d="M9 5.500 V10.500 M9 12 V13.800" stroke="#1e1e1e" stroke-width="1.800"/></svg>
<div class="t" style="left:298px;top:885px">警告 0</div>
<svg class="a" style="left:352px;top:884px" width="16" height="16" viewBox="0 0 16 16"><circle cx="8" cy="8" r="7.500" fill="#fff"/><circle cx="8" cy="8" r="6.500" fill="#1ba1e2"/><path d="M8 3.500 V5.300 M8 6.800 V12.500" stroke="#fff" stroke-width="2"/></svg>
<div class="t" style="left:372px;top:885px">消息 1</div>
<svg class="a" style="left:426px;top:884px" width="16" height="16" viewBox="0 0 16 16"><path d="M1.500 1.500 L6.500 6.500 M6.500 1.500 L1.500 6.500" stroke="#f05a4a" stroke-width="1.800"/><path d="M6 7.500 H15 L11.500 11 V15 L9.500 13.500 V11Z" fill="#d0d0d0"/></svg>
<div class="combo" style="left:456px;top:882px;width:150px;height:20px"></div>
<div class="t" style="left:460px;top:884px;font-size:12.5px;letter-spacing:.25px">生成 + IntelliSense</div>
<div class="arr" style="left:596px;top:890px"></div>
<div class="a" style="left:1713px;top:880px;width:200px;height:22px;background:#333337;border:1px solid #3f3f46"></div>
<div class="t" style="left:1718px;top:883px;color:#8a8a8a">搜索错误列表</div>
<div class="a" style="left:1900px;top:881px;width:12px;height:20px;background:#3f3f46"></div><svg class="a" style="left:1883px;top:883px" width="15" height="15" viewBox="0 0 16 16"><circle cx="10" cy="6" r="3.600" fill="none" stroke="#f1f1f1" stroke-width="1.800"/><path d="M7.400 8.600 L2.500 13.500" stroke="#f1f1f1" stroke-width="2.400" stroke-linecap="round"/></svg>
<div class="arrw" style="left:1902px;top:889px;border-width:3px;border-top-width:3.500px"></div>
<div class="a" style="left:35px;top:927px;width:1876px;height:1px;background:#3f3f46"></div>
<div class="a" style="left:60px;top:905px;width:1px;height:22px;background:#3f3f46"></div>
<div class="a" style="left:86px;top:905px;width:1px;height:22px;background:#3f3f46"></div>
<div class="a" style="left:136px;top:905px;width:1px;height:22px;background:#3f3f46"></div>
<div class="a" style="left:1428px;top:905px;width:1px;height:22px;background:#3f3f46"></div>
<div class="a" style="left:1578px;top:905px;width:1px;height:22px;background:#3f3f46"></div>
<div class="a" style="left:1728px;top:905px;width:1px;height:22px;background:#3f3f46"></div>
<div class="a" style="left:1762px;top:905px;width:1px;height:22px;background:#3f3f46"></div>
<div class="a" style="left:1888px;top:905px;width:1px;height:22px;background:#3f3f46"></div>
<div class="a" style="left:1911px;top:905px;width:1px;height:22px;background:#3f3f46"></div>
<div class="t" style="left:90px;top:909px">代码</div>
<div class="t" style="left:140px;top:909px">说明</div>
<div class="arrw" style="left:173px;top:914px"></div>
<div class="t" style="left:1432px;top:909px">项目</div>
<div class="t" style="left:1582px;top:909px">文件</div>
<div class="t" style="left:1732px;top:909px">行</div>
<div class="t" style="left:1767px;top:909px">禁止显示状态</div>
<svg class="a" style="left:52px;top:933px" width="6" height="10" viewBox="0 0 6 10"><path d="M0.600 0.800 L4.800 5 L0.600 9.200Z" fill="none" stroke="#999" stroke-width="1"/></svg>
<svg class="a" style="left:65px;top:930px" width="17" height="17" viewBox="0 0 16 16"><circle cx="8" cy="8" r="7.500" fill="#fff"/><circle cx="8" cy="8" r="6.500" fill="#1ba1e2"/><path d="M8 3.500 V5.300 M8 6.800 V12.500" stroke="#fff" stroke-width="2"/></svg>
<div class="t" style="left:90px;top:931px;font-size:12.5px;letter-spacing:.05px;color:#1e90e8">IDE0060</div>
<div class="t" style="left:140px;top:931px">删除未使用的参数 "args"</div>
<div class="t" style="left:1432px;top:931px;font-size:12.5px;letter-spacing:.25px">HelloAbp</div>
<div class="t" style="left:1582px;top:931px;font-size:12.5px;letter-spacing:.25px">Program.cs</div>
<div class="t" style="left:1732px;top:931px;font-size:12.5px;letter-spacing:.25px">7</div>
<div class="t" style="left:1767px;top:931px">活动</div>
</div><!--/errlist-->
<!-- STATUS -->
<div id="status">
<div class="a" style="left:0;top:1015px;width:1919px;height:25px;background:#007acc"></div>
<svg class="a" style="left:4px;top:1021px" width="17" height="12" viewBox="0 0 17 12"><path d="M3 1 H16 L14 11 H1Z" fill="none" stroke="#fff" stroke-width="1.300"/></svg>
<div class="t" style="left:28px;top:1020px;color:#fff">就绪</div>
<svg class="a" style="left:1882px;top:1019px" width="22" height="20" viewBox="0 0 22 20"><path d="M2 10.500 C4 9 3 3 7.500 3 C12 3 11 9 13 10.500Z" fill="#c8d8e8"/><rect x="6" y="11.500" width="3.500" height="3" fill="#c8d8e8"/><circle cx="13.500" cy="11.500" r="5.500" fill="#e51400"/><path d="M12.500 9 L14 8.200 V14.500" stroke="#fff" stroke-width="1.300" fill="none"/></svg>
</div><!--/status-->
</div>
<!-- OUTSIDE -->
<div id="outside">
<div class="a" style="left:48px;top:1040px;width:344px;height:8px;background:#fff"></div>
<div class="a" style="left:590px;top:1040px;width:48px;height:8px;background:#a0a0a0"></div>
<div class="a" style="left:1919px;top:47px;width:9px;height:977px;background:#2a2a2d"></div>
<div class="a" style="left:1919px;top:47px;width:1px;height:977px;background:#0a4f88"></div><div class="a" style="left:1920px;top:47px;width:1px;height:977px;background:#166db6"></div>
<div class="a" style="left:1919px;top:47px;width:9px;height:1px;background:#0b5c9c"></div>
<div class="a" style="left:1921px;top:124px;width:7px;height:30px;background:#3a3a3f"></div>
<div class="a" style="left:1921px;top:154px;width:7px;height:10px;background:#1e1e1e"></div>
<div class="a" style="left:1921px;top:164px;width:4px;height:100px;background:#38383c"></div>
<div class="a" style="left:1919px;top:999px;width:9px;height:25px;background:#007acc"></div>
<div class="a" style="left:1919px;top:1024px;width:9px;height:9px;background:#1c2a36"></div>
<div class="a" style="left:1925px;top:1025px;width:3px;height:4px;background:#4cc2ff"></div>
<svg class="a" style="left:1922px;top:1005px" width="6" height="12" viewBox="0 0 6 12"><path d="M2.500 0.500 H6 M0.500 11 H6 M2.500 0.500 L0.500 11" stroke="#fff" stroke-width="1.200" fill="none"/></svg>
</div><!--/outside-->
</body>
</html>
